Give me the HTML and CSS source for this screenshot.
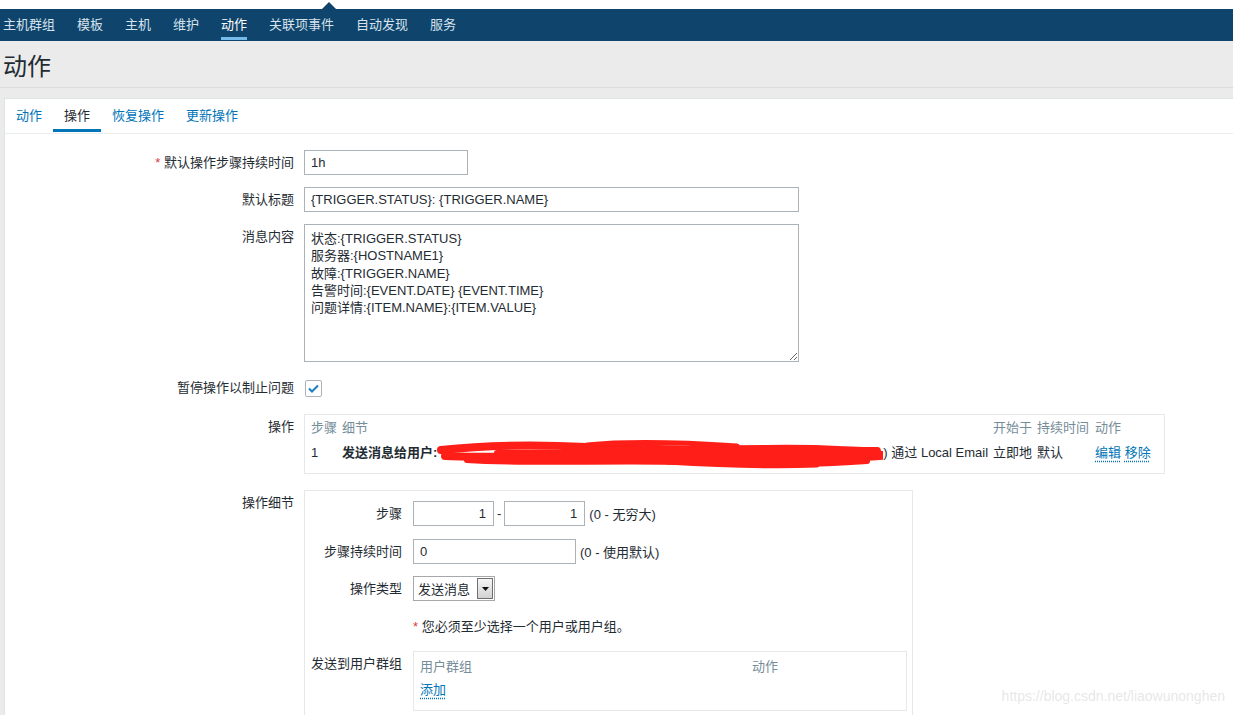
FILE: index.html
```html
<!DOCTYPE html>
<html lang="zh-CN">
<head>
<meta charset="utf-8">
<title>动作</title>
<link rel="stylesheet" href="styles.css">
</head>
<body>
<div class="top-strip"><span class="caret"></span></div>
<nav class="main-nav">
  <a href="#">主机群组</a>
  <a href="#">模板</a>
  <a href="#">主机</a>
  <a href="#">维护</a>
  <a href="#" class="active">动作</a>
  <a href="#">关联项事件</a>
  <a href="#">自动发现</a>
  <a href="#">服务</a>
</nav>
<header class="page-header"><h1>动作</h1></header>
<main class="panel">
  <ul class="tabs">
    <li><a href="#">动作</a></li>
    <li class="active"><a href="#">操作</a></li>
    <li><a href="#">恢复操作</a></li>
    <li><a href="#">更新操作</a></li>
  </ul>
  <div class="form">
    <div class="form-label"><span class="req">*</span> 默认操作步骤持续时间</div>
    <div class="form-field"><input class="input input-short" type="text" value="1h"></div>

    <div class="form-label">默认标题</div>
    <div class="form-field"><input class="input input-wide" type="text" value="{TRIGGER.STATUS}: {TRIGGER.NAME}"></div>

    <div class="form-label">消息内容</div>
    <div class="form-field"><textarea class="textarea">状态:{TRIGGER.STATUS}
服务器:{HOSTNAME1}
故障:{TRIGGER.NAME}
告警时间:{EVENT.DATE} {EVENT.TIME}
问题详情:{ITEM.NAME}:{ITEM.VALUE}</textarea></div>

    <div class="form-label label-check">暂停操作以制止问题</div>
    <div class="form-field field-check"><span class="checkbox"><svg width="11" height="9" viewBox="0 0 11 9"><path d="M1 4.5 L4 7.5 L10 1.5" fill="none" stroke="#1b7ec2" stroke-width="2"/></svg></span></div>

    <div class="form-label">操作</div>
    <div class="form-field">
      <div class="ops-box">
        <div class="ops-grid">
          <div class="th">步骤</div>
          <div class="th">细节</div>
          <div class="th">开始于</div>
          <div class="th">持续时间</div>
          <div class="th">动作</div>
          <div class="td">1</div>
          <div class="td"><b>发送消息给用户:</b><svg class="scribble" width="446" height="30" viewBox="0 0 446 30"><g fill="none" stroke="#ff1f18" stroke-linecap="round"><path d="M4 11 C40 7 90 5 150 8 S260 11 330 10 S410 13 440 12" stroke-width="8"/><path d="M8 17 C60 20 120 14 200 17 S320 22 400 19 S432 16 440 15" stroke-width="8"/><path d="M30 21 C90 25 170 21 250 23 S360 27 430 22" stroke-width="6"/><path d="M150 6 C190 2 240 3 300 7" stroke-width="5"/><path d="M230 23 C280 26 330 28 380 26" stroke-width="5"/><path d="M60 14 C150 12 250 16 420 16" stroke-width="6"/></g></svg>) 通过 Local Email</div>
          <div class="td">立即地</div>
          <div class="td">默认</div>
          <div class="td"><a class="link" href="#">编辑</a> <a class="link" href="#">移除</a></div>
        </div>
      </div>
    </div>

    <div class="form-label">操作细节</div>
    <div class="form-field">
      <div class="detail-box">
        <div class="form-label">步骤</div>
        <div class="inline-field">
          <input class="input input-num" type="text" value="1"><span class="dash">-</span><input class="input input-num" type="text" value="1"><span class="hint">(0 - 无穷大)</span>
        </div>

        <div class="form-label">步骤持续时间</div>
        <div class="inline-field">
          <input class="input input-mid" type="text" value="0"><span class="hint">(0 - 使用默认)</span>
        </div>

        <div class="form-label">操作类型</div>
        <div class="inline-field">
          <div class="select"><span class="select-text">发送消息</span><span class="select-btn"><svg width="7" height="4" viewBox="0 0 7 4"><path d="M0 0 H7 L3.5 4 Z" fill="#111"/></svg></span></div>
        </div>

        <div class="form-label"></div>
        <div class="note"><span class="req">*</span> 您必须至少选择一个用户或用户组。</div>

        <div class="form-label">发送到用户群组</div>
        <div class="inline-field">
          <div class="group-box">
            <div class="group-grid">
              <div class="th">用户群组</div>
              <div class="th">动作</div>
            </div>
            <a class="link add-link" href="#">添加</a>
          </div>
        </div>
      </div>
    </div>
  </div>
</main>
<div class="watermark">https://blog.csdn.net/liaowunonghen</div>
</body>
</html>
```

FILE: styles.css
```css
* {
  box-sizing: border-box;
}

html,
body {
  margin: 0;
  padding: 0;
  height: 715px;
  overflow: hidden;
}

body {
  position: relative;
  font-family: "Liberation Sans", "Noto Sans CJK SC", sans-serif;
  font-size: 13px;
  color: #1f2c33;
  background: #ebebeb;
}

a {
  text-decoration: none;
}

/* top strip + nav */
.top-strip {
  position: relative;
  height: 9px;
  background: #fff;
}

.caret {
  position: absolute;
  left: 322px;
  top: 2px;
  width: 0;
  height: 0;
  border-left: 7px solid transparent;
  border-right: 7px solid transparent;
  border-bottom: 7px solid #0f456c;
}

.main-nav {
  display: flex;
  gap: 22px;
  height: 32px;
  padding-left: 3px;
  background: #0f456c;
}

.main-nav a {
  position: relative;
  line-height: 32px;
  color: #d6e2ec;
}

.main-nav a.active {
  color: #fff;
}

.main-nav a.active::after {
  content: "";
  position: absolute;
  left: 0;
  right: 0;
  bottom: 1px;
  height: 3px;
  background: #76bbea;
}

/* page header */
.page-header {
  height: 47px;
  border-bottom: 1px solid #dcdcdc;
}

.page-header h1 {
  margin: 0;
  padding: 8px 0 0 3px;
  font-size: 24px;
  font-weight: normal;
  line-height: 36px;
  color: #1f2c33;
}

/* panel */
.panel {
  height: 640px;
  margin: 10px 0 0 4px;
  background: #fff;
  border: 1px solid #dfe4e7;
  border-right: 0;
}

.tabs {
  display: flex;
  height: 35px;
  margin: 0;
  padding: 0;
  list-style: none;
  border-bottom: 1px solid #ebeef0;
}

.tabs li {
  position: relative;
  padding: 0 11px;
  line-height: 33px;
}

.tabs li a {
  color: #0275b8;
}

.tabs li.active a {
  color: #1f2c33;
}

.tabs li.active::after {
  content: "";
  position: absolute;
  left: 0;
  right: 0;
  bottom: 1px;
  height: 3px;
  background: #0275b8;
}

/* form */
.form {
  display: grid;
  grid-template-columns: 289px 1fr;
  column-gap: 10px;
  row-gap: 12px;
  padding-top: 16px;
}

.form-label {
  text-align: right;
  line-height: 25px;
  white-space: nowrap;
}

.req {
  color: #dc3a37;
}

.input {
  display: block;
  height: 25px;
  padding: 0 6px;
  border: 1px solid #acb3b8;
  border-radius: 0;
  background: #fff;
  font: inherit;
  color: inherit;
  outline: none;
}

.input-short {
  width: 164px;
}

.input-wide {
  width: 495px;
}

.textarea {
  display: block;
  width: 495px;
  height: 138px;
  padding: 5px 6px;
  border: 1px solid #acb3b8;
  font: inherit;
  line-height: 17.25px;
  color: inherit;
  outline: none;
}

.label-check {
  line-height: 28px;
}

.field-check {
  display: flex;
  align-items: center;
  height: 28px;
}

.checkbox {
  display: flex;
  align-items: center;
  justify-content: center;
  width: 17px;
  height: 17px;
  margin-left: 1px;
  border: 1px solid #acb3b8;
  border-radius: 2px;
}

/* operations table */
.ops-box {
  width: 861px;
  margin-bottom: 4px;
  padding: 0 6px 8px;
  border: 1px solid #e6e9eb;
}

.ops-grid {
  display: grid;
  grid-template-columns: 31px 651px 44px 58px 1fr;
  white-space: nowrap;
}

.th {
  line-height: 26px;
  color: #768d99;
}

.td {
  line-height: 24px;
}

.td b {
  font-weight: bold;
}

.scribble {
  display: inline-block;
  margin: -6px 0;
  vertical-align: middle;
}

.link {
  color: #0275b8;
  text-decoration: underline dotted;
  text-underline-offset: 4px;
}

/* operation details */
.detail-box {
  display: grid;
  grid-template-columns: 91px 1fr;
  align-content: start;
  column-gap: 11px;
  row-gap: 12.5px;
  width: 609px;
  height: 240px;
  padding: 10px 6px 0;
  border: 1px solid #e6e9eb;
  border-bottom: 0;
}

.inline-field {
  display: flex;
  align-items: center;
  white-space: nowrap;
}

.input-num {
  width: 81px;
  text-align: right;
  padding-right: 7px;
}

.dash {
  margin: 0 3px;
}

.hint {
  margin-left: 4px;
}

.input-mid {
  width: 163px;
}

.select {
  display: flex;
  align-items: center;
  justify-content: space-between;
  width: 82px;
  height: 25px;
  padding: 0 1px 0 4px;
  border: 1px solid #a5a9ac;
  background: #fff;
}

.select-btn {
  display: flex;
  align-items: center;
  justify-content: center;
  width: 16px;
  height: 21px;
  border: 1px solid #707070;
  background: linear-gradient(#f6f6f6, #d2d2d2);
}

.note {
  line-height: 25px;
  white-space: nowrap;
}

.group-box {
  width: 494px;
  height: 60px;
  padding: 2px 6px 0;
  border: 1px solid #e6e9eb;
}

.group-grid {
  display: grid;
  grid-template-columns: 332px 1fr;
}

.add-link {
  display: inline-block;
  line-height: 20px;
}

/* watermark */
.watermark {
  position: absolute;
  right: 8px;
  bottom: 11px;
  font-family: "Liberation Sans", sans-serif;
  font-size: 14px;
  color: rgba(170, 170, 170, 0.3);
  text-shadow: 0 0 1px rgba(255, 255, 255, 0.8);
}
```
